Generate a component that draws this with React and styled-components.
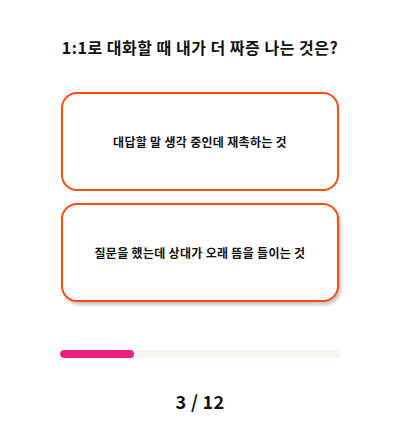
import React from "react";
import styled, { createGlobalStyle } from "styled-components";

const Global = createGlobalStyle`
  html, body { margin: 0; padding: 0; background: #fff; }
  body { font-family: "Noto Sans CJK KR", "Noto Sans", sans-serif; color: #111; }
`;

const Page = styled.div`
  width: 400px;
  height: 440px;
  display: flex;
  flex-direction: column;
  align-items: center;
  box-sizing: border-box;
  padding-top: 34px;
`;

const Title = styled.h1`
  margin: 0;
  font-size: 16px;
  font-weight: 700;
  line-height: 26px;
  letter-spacing: 0.5px;
`;

const Options = styled.div`
  width: 278px;
  margin-top: 32px;
  display: flex;
  flex-direction: column;
  gap: 12px;
`;

const Option = styled.button`
  height: 99px;
  box-sizing: border-box;
  border: 2px solid #ff4a0d;
  border-radius: 16px;
  background: #fff;
  font-family: inherit;
  font-size: 12px;
  font-weight: 700;
  letter-spacing: 0.3px;
  color: #111;
  display: flex;
  align-items: center;
  justify-content: center;
  cursor: pointer;
  padding: 0;
  box-shadow: ${(p) => (p.$raised ? "2px 3px 3px rgba(0,0,0,0.22)" : "none")};
`;

const Track = styled.div`
  width: 280px;
  height: 8px;
  margin-top: 48px;
  border-radius: 4px;
  background: #f8f4f0;
  overflow: hidden;
`;

const Fill = styled.div`
  height: 100%;
  border-radius: 4px;
  background: #e8207f;
`;

const Counter = styled.div`
  margin-top: 31px;
  font-size: 18px;
  font-weight: 700;
  line-height: 24px;
  letter-spacing: 0.3px;
`;

export default function App() {
  const current = 3;
  const total = 12;
  return (
    <>
      <Global />
      <Page>
        <Title>1:1로 대화할 때 내가 더 짜증 나는 것은?</Title>
        <Options>
          <Option>대답할 말 생각 중인데 재촉하는 것</Option>
          <Option $raised>질문을 했는데 상대가 오래 뜸을 들이는 것</Option>
        </Options>
        <Track>
          <Fill style={{ width: `${(current / total) * 100 + 1.4}%` }} />
        </Track>
        <Counter>
          {current} / {total}
        </Counter>
      </Page>
    </>
  );
}
